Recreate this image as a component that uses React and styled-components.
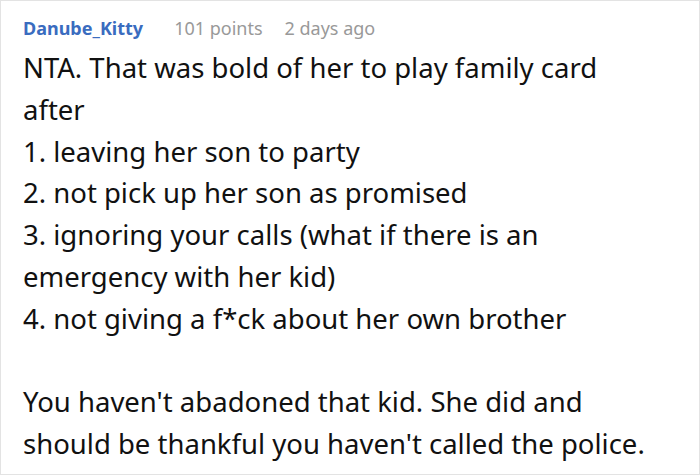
import React from 'react';
import styled, { createGlobalStyle } from 'styled-components';

const GlobalStyle = createGlobalStyle`
  html, body {
    margin: 0;
    padding: 0;
    background: #ffffff;
  }
`;

const Card = styled.article`
  box-sizing: border-box;
  width: 700px;
  height: 475px;
  border: 1px solid #e3e3e3;
  background: #ffffff;
  padding: 15px 22px 0 22px;
  font-family: 'Noto Sans', 'Open Sans', sans-serif;
  overflow: hidden;
`;

const Meta = styled.header`
  display: flex;
  align-items: baseline;
  gap: 31px;
  height: 31px;
  font-size: 18px;
`;

const Author = styled.span`
  color: #3a6cbf;
  font-weight: 700;
`;

const Info = styled.span`
  color: #999999;
  margin-left: ${(p) => (p.tight ? '-9px' : '0')};
`;

const Body = styled.div`
  color: #111111;
  font-size: 27.5px;
  line-height: 41.8px;
`;

const Line = styled.p`
  margin: 0;
  min-height: 41.8px;
  white-space: nowrap;
`;

const lines = [
  'NTA. That was bold of her to play family card',
  'after',
  '1. leaving her son to party',
  '2. not pick up her son as promised',
  '3. ignoring your calls (what if there is an',
  'emergency with her kid)',
  '4. not giving a f*ck about her own brother',
  '',
  "You haven't abadoned that kid. She did and",
  "should be thankful you haven't called the police.",
];

export default function App() {
  return (
    <>
      <GlobalStyle />
      <Card>
        <Meta>
          <Author>Danube_Kitty</Author>
          <Info>101 points</Info>
          <Info tight>2 days ago</Info>
        </Meta>
        <Body>
          {lines.map((text, i) => (
            <Line key={i}>{text}</Line>
          ))}
        </Body>
      </Card>
    </>
  );
}
